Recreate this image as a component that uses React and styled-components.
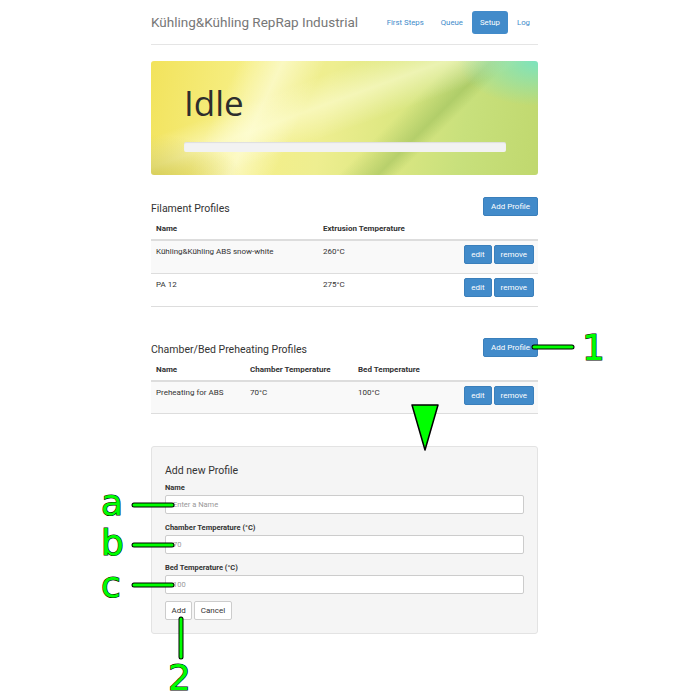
import styled, { createGlobalStyle } from 'styled-components';

const GlobalStyle = createGlobalStyle`
  body {
    margin: 0;
    background: #fff;
    font-family: Roboto, "Liberation Sans", sans-serif;
    color: #333;
  }
`;

const filaments = [
  { name: 'Kühling&Kühling ABS snow-white', temp: '260°C' },
  { name: 'PA 12', temp: '275°C' },
];

const preheats = [{ name: 'Preheating for ABS', chamber: '70°C', bed: '100°C' }];

const App = () => {
  return (
    <Page>
      <GlobalStyle />
      <Container>
        <Header>
          <Brand>Kühling&Kühling RepRap Industrial</Brand>
          <Nav>
            <NavItem>First Steps</NavItem>
            <NavItem>Queue</NavItem>
            <NavItem $active>Setup</NavItem>
            <NavItem>Log</NavItem>
          </Nav>
        </Header>

        <Jumbotron>
          <StateTitle>Idle</StateTitle>
          <Progress />
        </Jumbotron>

        <Section>
          <SectionHead>
            <SectionTitle>Filament Profiles</SectionTitle>
            <BlueButton>Add Profile</BlueButton>
          </SectionHead>
          <Table>
            <thead>
              <tr>
                <Th $w={157}>Name</Th>
                <Th>Extrusion Temperature</Th>
                <Th />
              </tr>
            </thead>
            <tbody>
              {filaments.map((f, i) => (
                <Row key={f.name} $striped={i % 2 === 0}>
                  <Td>{f.name}</Td>
                  <Td>{f.temp}</Td>
                  <Actions>
                    <SmallButton>edit</SmallButton>
                    <SmallButton>remove</SmallButton>
                  </Actions>
                </Row>
              ))}
            </tbody>
          </Table>
        </Section>

        <Section>
          <SectionHead>
            <SectionTitle>Chamber/Bed Preheating Profiles</SectionTitle>
            <BlueButton>Add Profile</BlueButton>
          </SectionHead>
          <Table>
            <thead>
              <tr>
                <Th $w={84}>Name</Th>
                <Th $w={98}>Chamber Temperature</Th>
                <Th>Bed Temperature</Th>
                <Th />
              </tr>
            </thead>
            <tbody>
              {preheats.map((p, i) => (
                <Row key={p.name} $striped={i % 2 === 0}>
                  <Td>{p.name}</Td>
                  <Td>{p.chamber}</Td>
                  <Td>{p.bed}</Td>
                  <Actions>
                    <SmallButton>edit</SmallButton>
                    <SmallButton>remove</SmallButton>
                  </Actions>
                </Row>
              ))}
            </tbody>
          </Table>
        </Section>

        <Well>
          <WellTitle>Add new Profile</WellTitle>
          <Field>
            <Label>Name</Label>
            <Input placeholder="Enter a Name" />
          </Field>
          <Field>
            <Label>Chamber Temperature (°C)</Label>
            <Input placeholder="70" />
          </Field>
          <Field>
            <Label>Bed Temperature (°C)</Label>
            <Input placeholder="100" />
          </Field>
          <FormButtons>
            <PlainButton>Add</PlainButton>
            <PlainButton>Cancel</PlainButton>
          </FormButtons>
        </Well>
      </Container>

      <Annotations width="697" height="700" viewBox="0 0 697 700">
        <g strokeLinecap="round">
          <line x1="534" y1="347" x2="572" y2="347" stroke="#000" strokeWidth="5" />
          <line x1="534" y1="347" x2="572" y2="347" stroke="#00ff00" strokeWidth="3" />
          <line x1="134" y1="505" x2="172" y2="505" stroke="#000" strokeWidth="5" />
          <line x1="134" y1="505" x2="172" y2="505" stroke="#00ff00" strokeWidth="3" />
          <line x1="134" y1="545" x2="172" y2="545" stroke="#000" strokeWidth="5" />
          <line x1="134" y1="545" x2="172" y2="545" stroke="#00ff00" strokeWidth="3" />
          <line x1="134" y1="585" x2="172" y2="585" stroke="#000" strokeWidth="5" />
          <line x1="134" y1="585" x2="172" y2="585" stroke="#00ff00" strokeWidth="3" />
          <line x1="181" y1="619" x2="181" y2="657" stroke="#000" strokeWidth="5" />
          <line x1="181" y1="619" x2="181" y2="657" stroke="#00ff00" strokeWidth="3" />
        </g>
        <polygon points="412,405 438,405 425,450" fill="#00ff00" stroke="#000" strokeWidth="1.5" strokeLinejoin="round" />
        <Mark x="582" y="360">1</Mark>
        <Mark x="101" y="515">a</Mark>
        <Mark x="101" y="555">b</Mark>
        <Mark x="101" y="597">c</Mark>
        <Mark x="168" y="690">2</Mark>
      </Annotations>
    </Page>
  );
};

export default App;

const Page = styled.div`
  position: relative;
  width: 697px;
  min-height: 700px;
`;

const Container = styled.div`
  width: 387px;
  margin-left: 151px;
  padding-bottom: 60px;
`;

const Header = styled.div`
  display: flex;
  align-items: center;
  justify-content: space-between;
  height: 44px;
  border-bottom: 1px solid #e5e5e5;
`;

const Brand = styled.div`
  font-size: 13.5px;
  color: #777;
`;

const Nav = styled.div`
  display: flex;
  gap: 1px;
`;

const NavItem = styled.div`
  height: 23px;
  line-height: 23px;
  padding: 0 8px;
  border-radius: 3px;
  font-size: 7.8px;
  color: ${(p) => (p.$active ? '#fff' : '#428bca')};
  background: ${(p) => (p.$active ? '#428bca' : 'transparent')};
`;

const Jumbotron = styled.div`
  margin-top: 16px;
  height: 114px;
  box-sizing: border-box;
  padding: 22px 32px 0 33px;
  border-radius: 3px;
  background:
    radial-gradient(ellipse 80px 45px at 100% 0%, rgba(120, 228, 195, 0.95), rgba(120, 224, 190, 0) 100%),
    radial-gradient(ellipse 90px 40px at 0% 100%, rgba(190, 180, 40, 0.55), rgba(190, 180, 40, 0) 100%),
    linear-gradient(160deg, rgba(255, 255, 255, 0) 30%, rgba(255, 255, 220, 0.55) 42%, rgba(255, 255, 255, 0) 55%),
    linear-gradient(115deg, rgba(255, 255, 255, 0) 20%, rgba(255, 255, 230, 0.6) 30%, rgba(255, 255, 255, 0) 40%),
    linear-gradient(135deg, rgba(255, 255, 255, 0) 60%, rgba(140, 180, 80, 0.45) 68%, rgba(255, 255, 255, 0) 72%),
    linear-gradient(100deg, #f2e35c 0%, #f6ef86 25%, #eeee90 45%, #dfe883 60%, #c8e07c 80%, #c0d86e 100%);
`;

const StateTitle = styled.h1`
  margin: 0;
  font-family: "Open Sans", Roboto, sans-serif;
  font-weight: 400;
  font-size: 35px;
  line-height: 40px;
  color: #2d2d2d;
`;

const Progress = styled.div`
  margin-top: 19px;
  height: 10px;
  border-radius: 2px;
  background: #f2f2f2;
  box-shadow: inset 0 1px 1px rgba(0, 0, 0, 0.08);
`;

const Section = styled.section`
  margin-top: 22px;
  & + & {
    margin-top: 31px;
  }
`;

const SectionHead = styled.div`
  display: flex;
  align-items: flex-end;
  justify-content: space-between;
  padding-bottom: 3px;
`;

const SectionTitle = styled.h3`
  margin: 0 0 1px;
  font-size: 10.5px;
  font-weight: 400;
  color: #333;
`;

const BlueButton = styled.button`
  height: 19px;
  padding: 0 7px;
  border: 1px solid #3a7fbb;
  border-radius: 2px;
  background: #428bca;
  color: #fff;
  font-family: Roboto, sans-serif;
  font-size: 8px;
`;

const Table = styled.table`
  width: 100%;
  border-collapse: collapse;
  font-size: 8px;
`;

const Th = styled.th`
  text-align: left;
  font-weight: 700;
  padding: 4px 5px 5px;
  height: 11px;
  width: ${(p) => (p.$w ? `${p.$w}px` : 'auto')};
  border-bottom: 2px solid #ddd;
  color: #333;
`;

const Row = styled.tr`
  height: 33px;
  background: ${(p) => (p.$striped ? '#f9f9f9' : '#fff')};
  border-bottom: 1px solid #ddd;
`;

const Td = styled.td`
  vertical-align: top;
  padding: 6px 5px 0;
  color: #333;
`;

const Actions = styled.td`
  text-align: right;
  vertical-align: top;
  padding: 4px 4px 0 0;
  white-space: nowrap;
`;

const SmallButton = styled(BlueButton)`
  padding: 0 6px;
  margin-left: 2px;
`;

const Well = styled.div`
  margin-top: 32px;
  padding: 17px 13px 13px;
  background: #f5f5f5;
  border: 1px solid #e3e3e3;
  border-radius: 3px;
  display: flex;
  flex-direction: column;
`;

const WellTitle = styled.div`
  font-size: 10.5px;
  color: #333;
  margin-bottom: 6px;
`;

const Field = styled.div`
  display: flex;
  flex-direction: column;
  & + & {
    margin-top: 9px;
  }
`;

const Label = styled.div`
  font-size: 7.5px;
  font-weight: 700;
  color: #333;
  margin-bottom: 3px;
`;

const Input = styled.input`
  display: block;
  width: 100%;
  box-sizing: border-box;
  height: 19px;
  padding: 0 7px;
  border: 1px solid #ccc;
  border-radius: 2px;
  background: #fff;
  font-family: Roboto, sans-serif;
  font-size: 7.5px;
  &::placeholder {
    color: #999;
  }
`;

const FormButtons = styled.div`
  display: flex;
  gap: 2px;
  margin-top: 7px;
`;

const PlainButton = styled.button`
  height: 19px;
  padding: 0 5.5px;
  border: 1px solid #ccc;
  border-radius: 2px;
  background: #fff;
  color: #333;
  font-family: Roboto, sans-serif;
  font-size: 8px;
`;

const Annotations = styled.svg`
  position: absolute;
  left: 0;
  top: 0;
  pointer-events: none;
`;

const Mark = styled.text`
  font-family: "DejaVu Sans", sans-serif;
  font-size: 36px;
  fill: #00ff00;
  stroke: #000;
  stroke-width: 1.2px;
  paint-order: stroke;
`;
